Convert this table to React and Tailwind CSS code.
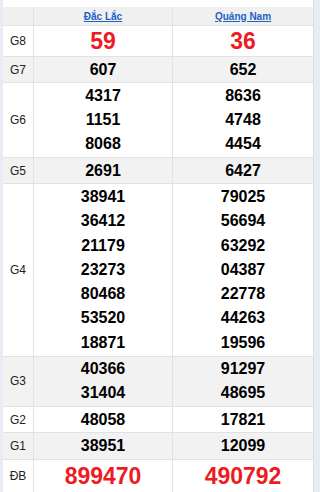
import React from 'react';

const rows = [
  { label: 'G8', a: ['59'], b: ['36'], big: true },
  { label: 'G7', a: ['607'], b: ['652'] },
  { label: 'G6', a: ['4317', '1151', '8068'], b: ['8636', '4748', '4454'] },
  { label: 'G5', a: ['2691'], b: ['6427'] },
  {
    label: 'G4',
    a: ['38941', '36412', '21179', '23273', '80468', '53520', '18871'],
    b: ['79025', '56694', '63292', '04387', '22778', '44263', '19596'],
  },
  { label: 'G3', a: ['40366', '31404'], b: ['91297', '48695'] },
  { label: 'G2', a: ['48058'], b: ['17821'] },
  { label: 'G1', a: ['38951'], b: ['12099'] },
  { label: 'ĐB', a: ['899470'], b: ['490792'], big: true, last: true },
];

const Cell = ({ nums, big, last, gray, right }) => (
  <div
    className={`flex flex-col items-center justify-center ${right ? '' : 'border-r'} border-b border-[#e2e2e2] ${
      gray ? 'bg-[#f2f2f2]' : 'bg-white'
    } ${big ? (last ? 'h-[34px]' : 'h-[31px]') : 'py-[0.5px]'}`}
  >
    {nums.map((n) => (
      <div
        key={n}
        className={
          big
            ? 'text-[23px] font-bold text-[#ed1c24] leading-[30px]'
            : 'text-[16px] font-bold text-black leading-[24.3px]'
        }
      >
        {n}
      </div>
    ))}
  </div>
);

export default function App() {
  return (
    <div
      className="min-h-screen bg-[#e8edf3] pl-[3px] pr-[6px]"
      style={{ fontFamily: '"Liberation Sans", Arial, sans-serif' }}
    >
      <div className="bg-white pt-[7px] border-r border-[#d8dde3] min-h-screen">
        <div className="grid grid-cols-[31px_139px_1fr]">
          <div className="h-[19px] bg-[#f0f0f0] border-r border-b border-[#e2e2e2]" />
          <div className="h-[19px] bg-[#f0f0f0] border-r border-b border-[#e2e2e2] flex items-center justify-center">
            <a href="#" className="text-[10px] font-bold text-[#1e62c4] underline">
              Đắc Lắc
            </a>
          </div>
          <div className="h-[19px] bg-[#f0f0f0] border-b border-[#e2e2e2] flex items-center justify-center">
            <a href="#" className="text-[10px] font-bold text-[#1e62c4] underline">
              Quảng Nam
            </a>
          </div>

          {rows.map((r, i) => {
            const gray = i % 2 === 1;
            return (
              <React.Fragment key={r.label}>
                <div
                  className={`flex items-center justify-center border-r border-b border-[#e2e2e2] text-[12px] text-[#222] ${
                    gray ? 'bg-[#f2f2f2]' : 'bg-white'
                  }`}
                >
                  {r.label}
                </div>
                <Cell nums={r.a} big={r.big} last={r.last} gray={gray} />
                <Cell nums={r.b} big={r.big} last={r.last} gray={gray} right />
              </React.Fragment>
            );
          })}
        </div>
      </div>
    </div>
  );
}
